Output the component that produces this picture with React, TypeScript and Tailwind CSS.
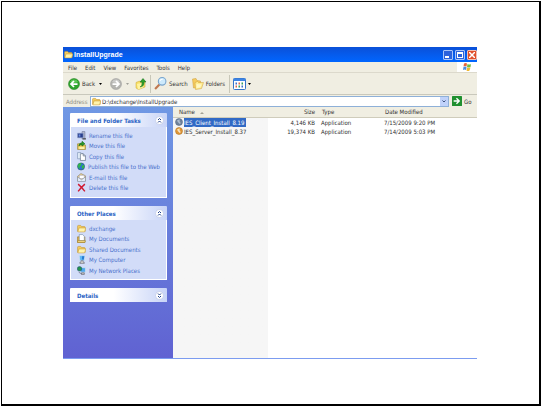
import type { ReactNode } from "react";

type Item = { label: string; icon: ReactNode };

function FolderIcon({ className = "size-[9px]" }: { className?: string }) {
	return (
		<svg viewBox="0 0 16 16" className={className}>
			<path d="M1 4q0-1.500 1.500-1.500h4l1.500 2h5q1.500 0 1.500 1.500v7h-13.500z" fill="#f4cc5c" stroke="#c09434" />
			<path d="M3.500 7h12l-2 7h-12z" fill="#fff4ac" stroke="#c89c3c" />
		</svg>
	);
}

function RenameIcon() {
	return (
		<svg viewBox="0 0 16 16" className="size-[9px]">
			<path d="M9 1h5v13h-5z" fill="#b8bcd0" stroke="#666c90" />
			<path d="M1 4h10v8h-10z" fill="#2a3f8c" stroke="#8fa0cc" />
			<path d="M3 6h3v4h-3z" fill="#6d8fe0" />
			<path d="M10 14h6" stroke="#444" strokeWidth="2" />
		</svg>
	);
}

function MoveIcon() {
	return (
		<svg viewBox="0 0 16 16" className="size-[9px]">
			<path d="M1 5h5l1 2h8v8h-14z" fill="#efcf60" stroke="#8a7420" />
			<path d="M4 11h9v3h-9z" fill="#fff6b8" />
			<path d="M3 9q1-6 6-6v-2.500l5 4.500-5 4v-2.500q-3 0-6 2.500z" fill="#2c9a2c" stroke="#126412" />
		</svg>
	);
}

function CopyIcon() {
	return (
		<svg viewBox="0 0 16 16" className="size-[9px]">
			<path d="M1 1h6l2 2v9h-8z" fill="#e4eefa" stroke="#7088ac" />
			<path d="M6 3h5l4 4v8h-9z" fill="#fff" stroke="#46556e" />
			<path d="M11 3v4h4" fill="none" stroke="#46556e" />
		</svg>
	);
}

function GlobeIcon() {
	return (
		<svg viewBox="0 0 16 16" className="size-[9px]">
			<circle cx="8" cy="8" r="7" fill="#2c70d0" stroke="#1c4c58" />
			<path d="M3 3q4-3 6-1l-1 4-3 2 1 5q-4-2-4.500-6zM10 6l4-1q1 5-2 8l-3-3z" fill="#30b844" />
		</svg>
	);
}

function MailIcon() {
	return (
		<svg viewBox="0 0 16 16" className="size-[9px]">
			<path d="M1 6l6-5 8 4v9h-14z" fill="#f3d895" stroke="#8a7a50" />
			<path d="M4 4h9v6h-9z" fill="#fff" stroke="#99a" />
			<path d="M1 7l7 5 7-5v8h-14z" fill="#e6eefb" stroke="#7a869c" />
		</svg>
	);
}

function DeleteIcon() {
	return (
		<svg viewBox="0 0 16 16" className="size-[9px]">
			<path d="M2 2q5 4 12 13M14 2q-6 5-12 13" fill="none" stroke="#d01830" strokeWidth="2.500" />
		</svg>
	);
}

function DocumentsIcon() {
	return (
		<svg viewBox="0 0 16 16" className="size-[9px]">
			<path d="M1 5h13v10h-13z" fill="#e5b545" stroke="#94701c" />
			<path d="M4 1h6l3 3v8h-9z" fill="#fff" stroke="#68809c" />
			<path d="M1 12h14l-1 3h-13z" fill="#ffe890" stroke="#94701c" />
		</svg>
	);
}

function ComputerIcon() {
	return (
		<svg viewBox="0 0 16 16" className="size-[9px]">
			<path d="M4 1h10l-1 9h-8z" fill="#5cb8f4" stroke="#dce8f4" />
			<path d="M9 2h4l-1 6h-3z" fill="#2878d0" />
			<path d="M7 10h4v3h2v2h-8v-2h2z" fill="#d4d4cc" stroke="#667" />
		</svg>
	);
}

function NetworkIcon() {
	return (
		<svg viewBox="0 0 16 16" className="size-[9px]">
			<path d="M6 3h9v8h-9z" fill="#50a8ec" stroke="#e0e8f0" />
			<path d="M8 12h5v3h-5z" fill="#c8c8c8" stroke="#556" />
			<circle cx="4.500" cy="5" r="4" fill="#28944c" stroke="#1c5078" />
			<path d="M3 11l5 3" stroke="#445" />
		</svg>
	);
}

function RoundArrowIcon({ forward = false }: { forward?: boolean }) {
	return (
		<svg viewBox="0 0 24 24" className="size-3">
			<circle cx="12" cy="12" r="11" fill={forward ? "#b4b4b0" : "#2fa52c"} stroke={forward ? "#989898" : "#1b7a1c"} />
			<path d="M4 8a9 9 0 0 1 16 0q-8 4-16 0z" fill={forward ? "#cacac8" : "#5cc454"} />
			<path
				d={forward ? "M5 12h13M12 6l6 6-6 6" : "M19 12h-13M12 6l-6 6 6 6"}
				fill="none"
				stroke="#fff"
				strokeWidth="3.500"
			/>
		</svg>
	);
}

function UpFolderIcon() {
	return (
		<svg viewBox="0 0 24 24" className="size-3">
			<path d="M2 9l7-3 2 3 9-3v12l-13 5-5-3z" fill="#f8e068" stroke="#c8a430" />
			<path d="M4 12l14-3-2 10-10 4z" fill="#fff3a0" />
			<path d="M10 18q5-2 4-10h-4l6-7 6 7h-4q1 9-8 10z" fill="#2ca02c" stroke="#146c18" />
		</svg>
	);
}

function SearchIcon() {
	return (
		<svg viewBox="0 0 24 24" className="size-[13px]">
			<path d="M10 14l-8 8" stroke="#c07850" strokeWidth="4" />
			<circle cx="15" cy="8" r="7" fill="#cdeafc" stroke="#78a4cc" strokeWidth="2" />
			<path d="M11 7q1-3 5-3" fill="none" stroke="#fff" strokeWidth="2" />
		</svg>
	);
}

function FoldersIcon() {
	return (
		<svg viewBox="0 0 24 24" className="size-3">
			<path d="M1 2l7-1 2 4 7 1v13l-14 1z" fill="#f6cc60" stroke="#cc9c38" />
			<path d="M6 9l5-2 2 2h10l-4 12-12 2z" fill="#ffec90" stroke="#cc9c38" />
			<path d="M9 12l10 1-3 6-7 1z" fill="#fff8c8" />
		</svg>
	);
}

function ViewsIcon() {
	return (
		<svg viewBox="0 0 26 24" className="h-3 w-[13px]">
			<rect x="1" y="1" width="24" height="22" rx="2" fill="#fff" stroke="#3474c8" strokeWidth="2" />
			<path d="M1 1h24v5h-24z" fill="#3d84e4" />
			<path d="M5 9h3v4h-3zM17 15h3v4h-3z" fill="#3a70c8" />
			<path d="M5 15h3v4h-3zM11 9h3v4h-3z" fill="#d86848" />
			<path d="M11 15h3v4h-3zM17 9h3v4h-3z" fill="#36a060" />
		</svg>
	);
}

function FlagIcon() {
	return (
		<svg viewBox="0 0 20 20" className="size-[10px]">
			<path d="M4 3q4-2 6 0l-1 6q-3-2-6 0z" fill="#e8643c" />
			<path d="M11 4q4 2 7 0l-1 6q-4 2-7 0z" fill="#74b840" />
			<path d="M3 10q3-2 6 0l-1 6q-3-2-6 0z" fill="#4c8ce0" />
			<path d="M10 11q3 2 7 0l-2 6q-3 2-6 0z" fill="#f0b830" />
		</svg>
	);
}

function GoIcon() {
	return (
		<svg viewBox="0 0 18 18" className="size-[10px]">
			<rect width="18" height="18" rx="1" fill="#209030" />
			<path d="M3 9h10M8 4l5 5-5 5" fill="none" stroke="#fff" strokeWidth="2.500" />
		</svg>
	);
}

function InstallerIcon({ selected }: { selected: boolean }) {
	return (
		<svg viewBox="0 0 16 16" className="size-2 shrink-0">
			<circle cx="8" cy="8" r="7" fill={selected ? "#71849c" : "#e09838"} stroke={selected ? "#4a5c78" : "#a8681c"} />
			<path d="M3 6q3-4 7-3l-3 5z" fill={selected ? "#a8b8cc" : "#fbdc98"} />
			<path d="M8 5v5h3" fill="none" stroke={selected ? "#c4d0e0" : "#fff"} strokeWidth="2" />
		</svg>
	);
}

function Caret({ className = "fill-black" }: { className?: string }) {
	return (
		<svg viewBox="0 0 6 4" className={`h-[2px] w-[3px] ${className}`}>
			<path d="M0 0h6l-3 4z" />
		</svg>
	);
}

const menus = ["File", "Edit", "View", "Favorites", "Tools", "Help"];

const tasks: Item[] = [
	{ label: "Rename this file", icon: <RenameIcon /> },
	{ label: "Move this file", icon: <MoveIcon /> },
	{ label: "Copy this file", icon: <CopyIcon /> },
	{ label: "Publish this file to the Web", icon: <GlobeIcon /> },
	{ label: "E-mail this file", icon: <MailIcon /> },
	{ label: "Delete this file", icon: <DeleteIcon /> },
];

const places: Item[] = [
	{ label: "dxchange", icon: <FolderIcon /> },
	{ label: "My Documents", icon: <DocumentsIcon /> },
	{ label: "Shared Documents", icon: <FolderIcon /> },
	{ label: "My Computer", icon: <ComputerIcon /> },
	{ label: "My Network Places", icon: <NetworkIcon /> },
];

const files = [
	{ name: "IES_Client_Install_8.19", size: "4,146 KB", type: "Application", date: "7/15/2009 9:20 PM", selected: true },
	{ name: "IES_Server_Install_8.37", size: "19,374 KB", type: "Application", date: "7/14/2009 5:03 PM", selected: false },
];

function TitleBar() {
	return (
		<header className="flex h-[15px] items-center bg-linear-to-b from-[#0a50d8] to-[#0066ff] pl-px text-white">
			<FolderIcon />
			<h1 className="ml-px flex-1 font-['Liberation_Sans',sans-serif] text-[7px] leading-[9px] font-bold">
				InstallUpgrade
			</h1>
			<div className="flex gap-[2px]">
				<button aria-label="Minimize" className="flex size-[10px] items-end rounded-[1px] border border-[#a8c4f8] bg-[#2c62dc] p-px">
					<span className="h-[2px] w-1 bg-white" />
				</button>
				<button aria-label="Maximize" className="size-[10px] rounded-[1px] border border-[#a8c4f8] bg-[#2c62dc] p-px">
					<span className="block size-[6px] border border-t-2 border-white" />
				</button>
				<button aria-label="Close" className="size-[10px] rounded-[1px] border border-[#f4c0b0] bg-[#e0502c] p-px">
					<svg viewBox="0 0 6 6" className="size-[6px]">
						<path d="M0 0l6 6M6 0l-6 6" stroke="#fff" strokeWidth="1.500" />
					</svg>
				</button>
			</div>
		</header>
	);
}

function MenuBar() {
	return (
		<nav className="flex h-[11px] items-stretch border-b border-[#dcd9cc] pl-[5px]">
			<div className="flex flex-1 items-center gap-2">
				{menus.map((menu) => (
					<button key={menu}>{menu}</button>
				))}
			</div>
			<div className="flex w-5 items-center justify-center bg-white">
				<FlagIcon />
			</div>
		</nav>
	);
}

function Toolbar() {
	return (
		<div className="flex h-[22px] items-center border-b border-[#c9c8bc] pl-[5px]">
			<button className="flex items-center gap-[2px]">
				<RoundArrowIcon />
				Back
			</button>
			<button aria-label="Back history" className="ml-1 flex">
				<Caret />
			</button>
			<button aria-label="Forward" className="ml-2 flex">
				<RoundArrowIcon forward />
			</button>
			<button aria-label="Forward history" className="ml-1 flex">
				<Caret className="fill-[#a0a098]" />
			</button>
			<button aria-label="Up" className="ml-[6px] flex">
				<UpFolderIcon />
			</button>
			<span className="mx-[3px] h-[18px] w-px bg-[#c8c7b8]" />
			<button className="flex items-center gap-[2px]">
				<SearchIcon />
				Search
			</button>
			<button className="ml-1 flex items-center gap-[2px]">
				<FoldersIcon />
				Folders
			</button>
			<span className="mr-[3px] ml-1 h-[18px] w-px bg-[#c8c7b8]" />
			<button aria-label="Views" className="flex items-center gap-[2px]">
				<ViewsIcon />
				<Caret />
			</button>
		</div>
	);
}

function AddressBar() {
	return (
		<form className="flex h-3 items-center pl-[3px]">
			<label htmlFor="address" className="w-6 text-[#8c8b80]">
				Address
			</label>
			<div className="flex h-[11px] flex-1 items-center border border-[#8eb0d8] bg-white pl-px">
				<FolderIcon />
				<input
					id="address"
					defaultValue="D:\dxchange\InstallUpgrade"
					className="ml-px h-[9px] min-w-0 flex-1 outline-none"
				/>
				<button type="button" aria-label="Show addresses" className="flex h-[9px] w-2 items-center justify-center bg-[#c0d2fa]">
					<svg viewBox="0 0 8 6" className="h-[3px] w-1">
						<path d="M1 1l3 3 3-3" fill="none" stroke="#3c507c" strokeWidth="2" />
					</svg>
				</button>
			</div>
			<button type="button" className="ml-[3px] flex w-[25px] items-center gap-[2px]">
				<GoIcon />
				Go
			</button>
		</form>
	);
}

function Panel({ title, items = [], open = true }: { title: string; items?: Item[]; open?: boolean }) {
	return (
		<section>
			<div className="flex h-[14px] items-center rounded-t-[1px] bg-linear-to-r from-white from-45% to-[#c8d4f7] pr-[3px] pl-[7px]">
				<h2 className="flex-1 font-bold text-[#2a62c4]">{title}</h2>
				<button aria-label={open ? `Collapse ${title}` : `Expand ${title}`} className="flex">
					<svg viewBox="0 0 18 18" className="size-[9px]">
						<circle cx="9" cy="9" r="8" fill="#fff" stroke="#a8b4dc" />
						<path
							d={open ? "M6 8l3-3 3 3M6 13l3-3 3 3" : "M6 5l3 3 3-3M6 10l3 3 3-3"}
							fill="none"
							stroke="#20408c"
							strokeWidth="2"
						/>
					</svg>
				</button>
			</div>
			{open && (
				<ul className="border border-t-0 border-white bg-[#d2dcf8] px-[6px] pt-[3px] pb-1 text-[#4a72cc]">
					{items.map((item) => (
						<li key={item.label} className="pt-px even:pb-px">
							<a href="#" className="flex h-[9px] items-center gap-[3px] whitespace-nowrap">
								{item.icon}
								{item.label}
							</a>
						</li>
					))}
				</ul>
			)}
		</section>
	);
}

function Sidebar() {
	return (
		<aside className="flex w-[110px] shrink-0 flex-col gap-2 bg-linear-to-b from-[#7098e4] to-[#6062d2] px-[6px] pt-[6px] pb-14 pl-[7px]">
			<Panel title="File and Folder Tasks" items={tasks} />
			<Panel title="Other Places" items={places} />
			<Panel title="Details" open={false} />
		</aside>
	);
}

function FileList() {
	return (
		<div className="flex-1 bg-linear-to-r from-[#f6f6f6] from-[95px] to-white to-[95px]">
			<table className="w-full table-fixed text-left">
				<thead className="bg-[#f0eee2]">
					<tr className="h-[10px] border-b border-[#cfccbb]">
						<th className="w-[95px] pl-[6px] font-normal">
							Name
							<svg viewBox="0 0 8 4" className="ml-[5px] inline h-[2px] w-1 fill-[#a4a294]">
								<path d="M0 4h8l-4-4z" />
							</svg>
						</th>
						<th className="w-[47px] text-right font-normal">Size</th>
						<th className="w-[63px] pl-[7px] font-normal">Type</th>
						<th className="pl-[7px] font-normal">Date Modified</th>
					</tr>
				</thead>
				<tbody>
					{files.map((file) => (
						<tr key={file.name} className="h-[9px] whitespace-nowrap">
							<td className="pl-[2px]">
								<div className="flex items-center gap-px">
									<InstallerIcon selected={file.selected} />
									<span className={file.selected ? "bg-[#316ac5] pr-[2px] text-white" : ""}>{file.name}</span>
								</div>
							</td>
							<td className="text-right">{file.size}</td>
							<td className="pl-[6px]">{file.type}</td>
							<td className="pl-[6px]">{file.date}</td>
						</tr>
					))}
				</tbody>
			</table>
		</div>
	);
}

export default function App() {
	return (
		<div className="flex min-h-screen bg-white pt-px pl-px">
			<main className="flex-1 border border-r-2 border-b-2 border-black py-[45px] pr-[62px] pl-[61px]">
				<div className="border-b border-[#7c9cf0] font-['DejaVu_Sans_Condensed','Liberation_Sans',sans-serif] text-[6px] leading-[9px] text-[#303030]">
					<TitleBar />
					<div className="bg-[#f0eee2]">
						<MenuBar />
						<Toolbar />
						<AddressBar />
					</div>
					<div className="flex items-stretch">
						<Sidebar />
						<FileList />
					</div>
				</div>
			</main>
		</div>
	);
}
